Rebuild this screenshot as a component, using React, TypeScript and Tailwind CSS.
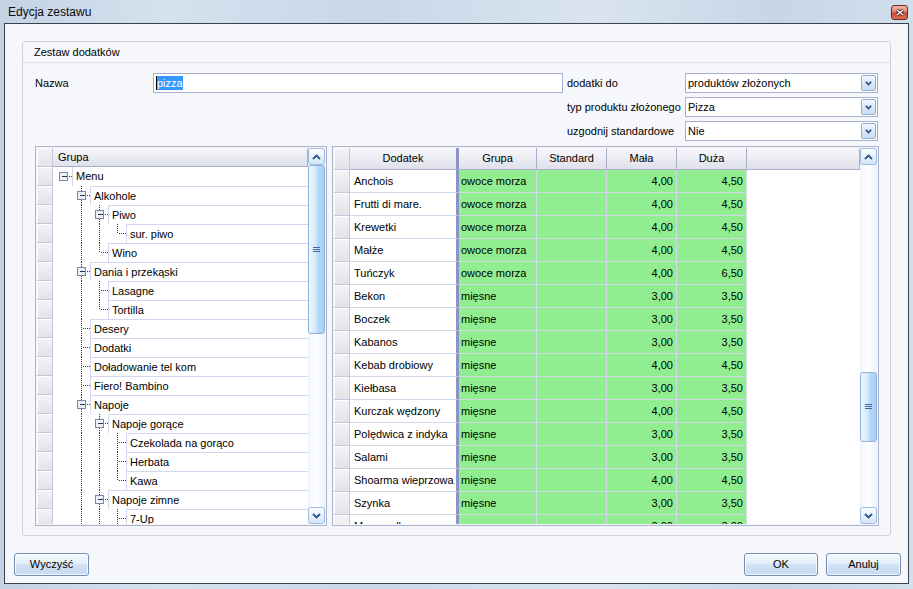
import React from 'react';

type TreeNode = [number, string, boolean, boolean];

// level, label, expandable, last sibling
const tree: TreeNode[] = [
  [0, 'Menu', true, true],
  [1, 'Alkohole', true, false],
  [2, 'Piwo', true, false],
  [3, 'sur. piwo', false, true],
  [2, 'Wino', false, true],
  [1, 'Dania i przekąski', true, false],
  [2, 'Lasagne', false, false],
  [2, 'Tortilla', false, true],
  [1, 'Desery', false, false],
  [1, 'Dodatki', false, false],
  [1, 'Doładowanie tel kom', false, false],
  [1, 'Fiero! Bambino', false, false],
  [1, 'Napoje', true, false],
  [2, 'Napoje gorące', true, false],
  [3, 'Czekolada na gorąco', false, false],
  [3, 'Herbata', false, false],
  [3, 'Kawa', false, true],
  [2, 'Napoje zimne', true, false],
  [3, '7-Up', false, false],
];

type Addon = [string, string, string, string];

const addons: Addon[] = [
  ['Anchois', 'owoce morza', '4,00', '4,50'],
  ['Frutti di mare.', 'owoce morza', '4,00', '4,50'],
  ['Krewetki', 'owoce morza', '4,00', '4,50'],
  ['Małże', 'owoce morza', '4,00', '4,50'],
  ['Tuńczyk', 'owoce morza', '4,00', '6,50'],
  ['Bekon', 'mięsne', '3,00', '3,50'],
  ['Boczek', 'mięsne', '3,00', '3,50'],
  ['Kabanos', 'mięsne', '3,00', '3,50'],
  ['Kebab drobiowy', 'mięsne', '4,00', '4,50'],
  ['Kiełbasa', 'mięsne', '3,00', '3,50'],
  ['Kurczak wędzony', 'mięsne', '4,00', '4,50'],
  ['Polędwica z indyka', 'mięsne', '3,00', '3,50'],
  ['Salami', 'mięsne', '3,00', '3,50'],
  ['Shoarma wieprzowa', 'mięsne', '4,00', '4,50'],
  ['Szynka', 'mięsne', '3,00', '3,50'],
  ['Mozzarella', 'sery', '3,00', '3,00'],
];

function Indicator({ className = '' }: { className?: string }) {
  return (
    <div
      className={`w-[16px] shrink-0 border-r border-b border-[#c4c8da] bg-[linear-gradient(180deg,#f3f3f7,#e2e3ea)] shadow-[inset_1px_1px_0_#ffffff] ${className}`}
    />
  );
}

function Chevron({ up }: { up?: boolean }) {
  return (
    <svg width="9" height="6" viewBox="0 0 9 6">
      <path
        d={up ? 'M1 5 L4.5 1.5 L8 5' : 'M1 1 L4.5 4.5 L8 1'}
        fill="none"
        stroke="#2f5688"
        strokeWidth="1.8"
      />
    </svg>
  );
}

function ArrowButton({ up }: { up?: boolean }) {
  return (
    <div className="h-[17px] shrink-0 rounded-[3px] border border-[#9dbde2] bg-[linear-gradient(180deg,#fbfdff,#e6f0fa_50%,#d3e5f7)] flex items-center justify-center">
      <Chevron up={up} />
    </div>
  );
}

function ScrollBar({ gap, thumb }: { gap: string; thumb: string }) {
  return (
    <div className="w-[17px] shrink-0 flex flex-col bg-[linear-gradient(90deg,#eef4fb,#ffffff_45%,#eaf2fb)]">
      <ArrowButton up />
      <div className="flex-1 flex flex-col">
        <div className={gap} />
        <div
          className={`${thumb} rounded-[3px] border border-[#8eb2dd] bg-[linear-gradient(90deg,#eef6fe_0%,#d9ebfb_40%,#b7d9f6_60%,#a8cff2_100%)] flex items-center justify-center`}
        >
          <svg width="7" height="6" viewBox="0 0 7 6">
            <path d="M0 0.5H7M0 2.5H7M0 4.5H7" stroke="#3e6aa3" strokeWidth="1" />
          </svg>
        </div>
      </div>
      <ArrowButton />
    </div>
  );
}

function TreeLines({
  level,
  expandable,
  last,
  open,
}: {
  level: number;
  expandable: boolean;
  last: boolean;
  open: boolean[];
}) {
  const w = 19 + 18 * level;
  const col = (k: number) => 10 + 18 * k + 0.5;
  const p = col(level);
  return (
    <svg width={w} height={19} className="shrink-0">
      <g stroke="#3c3c3c" strokeDasharray="1 1" shapeRendering="crispEdges">
        {open.map((o, k) =>
          k >= 1 && k < level && o ? <line key={k} x1={col(k)} y1={0} x2={col(k)} y2={19} /> : null
        )}
        {level >= 1 && <line x1={p} y1={0} x2={p} y2={last ? 10 : 19} />}
        <line x1={expandable ? p + 5 : p + 1} y1={9.5} x2={w} y2={9.5} />
      </g>
      {expandable && (
        <g shapeRendering="crispEdges">
          <rect x={p - 4} y={5.5} width={8} height={8} fill="#eef0f7" stroke="#7c86ad" />
          <line x1={p - 2} y1={9.5} x2={p + 3} y2={9.5} stroke="#27335f" />
        </g>
      )}
    </svg>
  );
}

function GroupTree() {
  const open: boolean[] = [];
  const rows = tree.map(([level, label, expandable, last]) => {
    const snapshot = open.slice(0, level);
    open[level] = !last;
    return { level, label, expandable, last, open: snapshot };
  });

  return (
    <div className="w-[292px] shrink-0 border border-[#aeb3d0] p-[1px] bg-[#f3f3f8] flex">
      <div className="flex-1 bg-white overflow-hidden flex flex-col">
        <div className="flex h-[19px] shrink-0">
          <Indicator />
          <div className="flex-1 border-r border-b border-[#a9aec9] bg-[linear-gradient(180deg,#f8f8fb,#dfe0ea)] pl-[5px] flex items-center">
            Grupa
          </div>
        </div>
        {rows.map((r, i) => (
          <div key={i} className="flex h-[19px] shrink-0">
            <Indicator />
            <TreeLines level={r.level} expandable={r.expandable} last={r.last} open={r.open} />
            <div
              className={`flex-1 border-l border-[#d3d6ee] pl-[3px] flex items-center whitespace-nowrap ${
                i === 0 ? '' : 'border-t'
              }`}
            >
              {r.label}
            </div>
          </div>
        ))}
      </div>
      <ScrollBar gap="h-0" thumb="h-[169px]" />
    </div>
  );
}

function AddonGrid() {
  const head =
    'h-full shrink-0 border-r border-b border-[#aab0cc] bg-[linear-gradient(180deg,#f8f8fb,#dfe0ea)] flex items-center justify-center';
  return (
    <div className="w-[547px] shrink-0 ml-[5px] border border-[#aeb3d0] p-[1px] bg-[#f3f3f8] flex">
      <div className="flex-1 bg-white overflow-hidden flex flex-col">
        <div className="flex h-[22px] shrink-0">
          <Indicator />
          <div className={`${head} w-[109px] border-r-[3px] border-r-[#8c93c6]`}>Dodatek</div>
          <div className={`${head} w-[78px]`}>Grupa</div>
          <div className={`${head} w-[70px]`}>Standard</div>
          <div className={`${head} w-[70px]`}>Mała</div>
          <div className={`${head} w-[70px]`}>Duża</div>
          <div className={`${head} flex-1`} />
        </div>
        {addons.map(([name, group, small, big]) => (
          <div key={name} className="flex h-[23px] shrink-0">
            <Indicator />
            <div className="w-[109px] shrink-0 border-b border-r-[3px] border-b-[#d3d7ea] border-r-[#8c93c6] pl-[4px] flex items-center whitespace-nowrap">
              {name}
            </div>
            <div className="w-[78px] shrink-0 bg-[#90ee90] border-r border-b border-[#d2d8e6] pl-[2px] flex items-center whitespace-nowrap">
              {group}
            </div>
            <div className="w-[70px] shrink-0 bg-[#90ee90] border-r border-b border-[#d2d8e6]" />
            <div className="w-[70px] shrink-0 bg-[#90ee90] border-r border-b border-[#d2d8e6] pr-[3px] flex items-center justify-end">
              {small}
            </div>
            <div className="w-[70px] shrink-0 bg-[#90ee90] border-r border-b border-[#d2d8e6] pr-[3px] flex items-center justify-end">
              {big}
            </div>
            <div className="flex-1" />
          </div>
        ))}
      </div>
      <ScrollBar gap="h-[207px]" thumb="h-[70px]" />
    </div>
  );
}

function Combo({ value }: { value: string }) {
  return (
    <div className="w-[193px] h-[20px] border border-[#a9adcf] bg-white flex items-center pl-[2px] pr-[1px]">
      <span className="flex-1">{value}</span>
      <div className="w-[15px] h-[16px] rounded-[2px] border border-[#93afd4] bg-[linear-gradient(180deg,#f6faff,#dbe9f8_50%,#c9def4)] flex items-center justify-center">
        <svg width="7" height="5" viewBox="0 0 7 5">
          <path d="M0.8 0.8 L3.5 3.5 L6.2 0.8" fill="none" stroke="#24467a" strokeWidth="1.6" />
        </svg>
      </div>
    </div>
  );
}

function WinButton({ label, className }: { label: string; className: string }) {
  return (
    <button
      className={`h-[23px] rounded-[3px] border border-[#7390b8] bg-[linear-gradient(180deg,#f4f8fd_0%,#e3edf8_45%,#d0e1f3_52%,#c7dbf1_100%)] shadow-[inset_0_0_0_1px_rgba(255,255,255,0.75)] text-[11px] text-black ${className}`}
    >
      {label}
    </button>
  );
}

export default function App() {
  return (
    <div className="w-[913px] h-[589px] flex flex-col overflow-hidden bg-[linear-gradient(90deg,#c3d3e4_0%,#d5e1ee_18%,#c8d7e8_40%,#d9e4ef_65%,#c6d6e7_85%,#d2dfec_100%)] font-['Liberation_Sans',Arial,sans-serif] text-[11px] text-black">
      {/* Title bar */}
      <div className="h-[23px] shrink-0 flex items-center justify-between pl-[8px] pr-[5px]">
        <span className="text-[12px] text-[#0c0c0c]">Edycja zestawu</span>
        <div className="w-[17px] h-[15px] mt-[2px] rounded-[3px] border border-[#6e2a1c] bg-[linear-gradient(180deg,#f2b7a6_0%,#e0806a_48%,#c9482a_52%,#d9705a_100%)] flex items-center justify-center">
          <svg width="8" height="7" viewBox="0 0 8 7">
            <path d="M1 1 L7 6 M7 1 L1 6" stroke="#3b1a12" strokeWidth="3" />
            <path d="M1 1 L7 6 M7 1 L1 6" stroke="#ffffff" strokeWidth="1.6" />
          </svg>
        </div>
      </div>

      {/* Client area */}
      <div className="flex-1 mx-[4px] mb-[5px] border border-[#39414d] bg-[#f6f7fa] flex flex-col">
        <div className="mt-[17px] mx-[17px] h-[495px] border border-[#d0d3dc] rounded-[3px] flex flex-col">
          <div className="h-[21px] shrink-0 border-b border-[#e1e3e9] pl-[11px] flex items-center">
            Zestaw dodatków
          </div>
          <div className="flex-1 pl-[12px] pt-[10px] flex flex-col">
            <div className="flex items-start">
              <div className="w-[118px] h-[20px] flex items-center">Nazwa</div>
              <div className="w-[410px] h-[20px] border border-[#a9adcf] bg-white flex items-center pl-[2px]">
                <span className="w-[1px] h-[14px] bg-black" />
                <span className="bg-[#3399ff] text-white leading-[14px]">pizza</span>
              </div>
              <div className="ml-[4px] flex flex-col gap-[4px]">
                <div className="flex">
                  <div className="w-[118px] h-[20px] flex items-center">dodatki do</div>
                  <Combo value="produktów złożonych" />
                </div>
                <div className="flex">
                  <div className="w-[118px] h-[20px] flex items-center">typ produktu złożonego</div>
                  <Combo value="Pizza" />
                </div>
                <div className="flex">
                  <div className="w-[118px] h-[20px] flex items-center">uzgodnij standardowe</div>
                  <Combo value="Nie" />
                </div>
              </div>
            </div>
            <div className="mt-[5px] h-[380px] flex">
              <GroupTree />
              <AddonGrid />
            </div>
          </div>
        </div>

        <div className="mt-[17px] flex items-center pl-[9px] pr-[7px]">
          <WinButton label="Wyczyść" className="w-[75px]" />
          <div className="flex-1" />
          <WinButton label="OK" className="w-[74px]" />
          <WinButton label="Anuluj" className="w-[75px] ml-[8px]" />
        </div>
      </div>
    </div>
  );
}
